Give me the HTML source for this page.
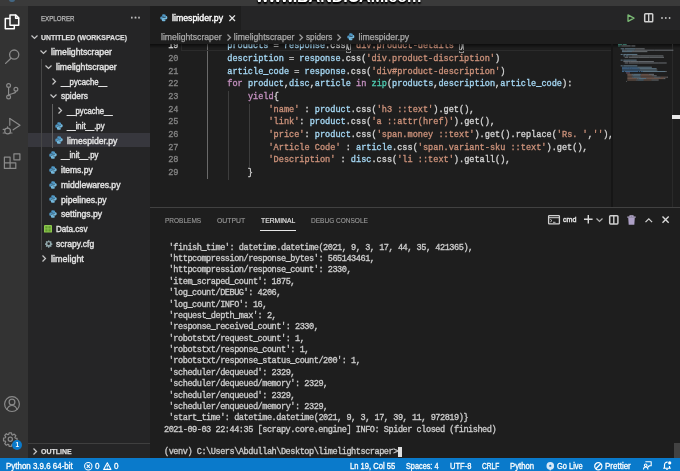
<!DOCTYPE html><html><head><meta charset="utf-8"><title>limespider.py - Untitled (Workspace) - Visual Studio Code</title><style>
*{margin:0;padding:0;box-sizing:border-box}
html,body{width:680px;height:471px;overflow:hidden;background:#1e1e1e}
#root{position:absolute;left:0;top:0;width:680px;height:471px;will-change:transform;overflow:hidden;filter:blur(0.3px)}
body{position:relative;font-family:"Liberation Sans",sans-serif;font-size:8.67px;color:#ccc;-webkit-font-smoothing:antialiased}
.abs{position:absolute}
#title{left:0;top:0;width:680px;height:6px;background:#3a3a3a;overflow:hidden}
#wm{left:256px;top:-11.6px;font-size:16.2px;font-weight:bold;color:#fff;letter-spacing:-0.15px;white-space:nowrap;line-height:16px;text-shadow:0 1px 1px #000,0 1.5px 1.5px #000,0 0 1px #000}
#act{left:0;top:5.5px;width:28px;height:452px;background:#333}
#side{left:28px;top:5.5px;width:122px;height:452px;background:#252526}
#tabs{left:150px;top:5.5px;width:530px;height:24px;background:#252526}
#tab{left:150px;top:6px;width:91px;height:24px;background:#1e1e1e}
#status{left:0;top:457.5px;width:680px;height:14px;background:#0a7acb}
.row{position:absolute;left:28px;width:122px;height:14.67px;line-height:14.67px;white-space:nowrap;color:#ccc}
.row span{position:absolute;top:0}
.sel{background:#37373d}
.t{-webkit-text-stroke:0.25px;position:absolute;white-space:nowrap;line-height:12px;height:12px}
.code{-webkit-text-stroke:0.32px;position:absolute;white-space:pre;font-family:"Liberation Mono",monospace;font-size:8.583px;line-height:12.667px;height:12.667px;color:#d4d4d4}
.ln{-webkit-text-stroke:0.3px;position:absolute;white-space:pre;font-family:"Liberation Mono",monospace;font-size:8.583px;line-height:12.667px;height:12.667px;color:#858585;text-align:right;width:30px;left:148.5px}
.term{-webkit-text-stroke:0.32px;position:absolute;white-space:pre;font-family:"Liberation Mono",monospace;font-size:8.583px;letter-spacing:-0.470px;line-height:11.333px;height:11.333px;color:#ccc;left:168.3px}
.v{color:#a4d6f2}.s{color:#cb917a}.k{color:#c390bf}.f{color:#d4d4d4}.c{color:#4ec9b0}.p{color:#d4d4d4}.b{color:#ffd700}
.g{position:absolute;width:1px;background:#404040}
svg{position:absolute;overflow:visible}
.st{-webkit-text-stroke:0.3px;position:absolute;top:460.1px;white-space:nowrap;color:#fff;font-size:8.67px;line-height:12px;height:12px}
.pt{position:absolute;top:214.6px;white-space:nowrap;color:#969696;font-size:7.9px;transform-origin:0 50%;-webkit-text-stroke:0.15px;line-height:12px;height:12px}
</style></head><body>
<div id="root">
<div id="title" class="abs"><div id="wm" class="abs">www.BANDICAM.com</div><div class="abs" style="left:8.5px;top:-3px;width:6px;height:4.5px;border-radius:3px;background:#4a8cc0;opacity:.55"></div></div>
<div id="act" class="abs"></div><div id="side" class="abs"></div><div id="tabs" class="abs"></div><div id="tab" class="abs"></div>
<svg style="left:0;top:0" width="28" height="471" viewBox="0 0 28 471" fill="none" stroke="#858585" stroke-width="1.1" stroke-linejoin="round" stroke-linecap="round">
<g stroke="#fff" stroke-width="1.5"><path d="M10 15h5.800l2.900 2.900v7.300H10z"/><path d="M15.600 15.200v3h3"/><path d="M9.800 18.400H5.300v10.400h9v-3.400"/></g>
<g stroke="#8a8a8a" stroke-width="1.3"><circle cx="14.2" cy="54.600" r="4.600"/><path d="M11 58.200l-5.400 5.200"/></g>
<g stroke="#8a8a8a" stroke-width="1.2"><circle cx="8.600" cy="85.500" r="1.900"/><circle cx="8.600" cy="97" r="1.900"/><circle cx="15.900" cy="89.300" r="1.900"/><path d="M8.600 87.400v7.700M15.900 91.200c0 3.300-7.300 1.800-7.300 4.600"/></g>
<g stroke="#8a8a8a" stroke-width="1.2"><path d="M9.800 118.500l10.200 6.800-6.800 4.500"/><path d="M9.800 118.500v6.800"/><circle cx="7.600" cy="131" r="2.900"/><path d="M3.200 129.400h1.500M3.200 133h1.500M10.500 133h1.500M7.600 128.100v-1.300"/></g>
<g stroke="#8a8a8a" stroke-width="1.2"><path d="M4.400 157.200h5.700v5.600H4.400zM4.400 162.800h5.700v5.600H4.400zM10.100 162.800h5.700v5.600h-5.700zM13.900 153.800h6v6h-6z"/></g>
<g stroke="#8a8a8a" stroke-width="1.2"><circle cx="12" cy="404.100" r="7.400"/><circle cx="12" cy="402" r="2.900"/><path d="M7 409.500c.9-2.700 2.800-4 5-4s4.100 1.300 5 4"/></g>
</svg>
<svg style="left:2.6px;top:431.9px" width="14.600" height="14.600" viewBox="0 0 16 16"><path fill="none" stroke="#8a8a8a" stroke-width="1.350" stroke-linejoin="round" d="M6.700 1h2.600l.4 2 .9.400 1.700-1.100 1.800 1.800-1.100 1.700.4.900 2 .4v2.600l-2 .4-.4.900 1.100 1.700-1.800 1.800-1.700-1.100-.9.400-.4 2H6.700l-.4-2-.9-.4-1.700 1.100-1.800-1.800 1.100-1.700-.4-.9-2-.4V6.700l2-.4.4-.9-1.100-1.700 1.800-1.800 1.700 1.100.9-.4z"/><circle cx="8" cy="8" r="2.300" fill="none" stroke="#8a8a8a" stroke-width="1.350"/></svg>
<div class="abs" style="left:12.4px;top:440px;width:9.600px;height:9.600px;border-radius:5px;background:#0a7acb"></div>
<div class="abs" style="left:12.4px;top:440px;width:9.600px;height:9.600px;line-height:9.800px;text-align:center;font-size:6.400px;font-weight:bold;color:#fff">1</div>
<div class="t" id="expl" style="left:41.4px;font-size:7.9px;transform:scaleX(0.7809);transform-origin:0 50%;top:12.5px;color:#bbb">EXPLORER</div>
<div class="t" style="left:130.6px;top:11.8px;font-size:9px;color:#c5c5c5;letter-spacing:0.6px;font-weight:bold">···</div>
<div class="abs sel" style="left:28px;top:132.8px;width:122px;height:14.3px"></div>
<div class="g" style="left:41.4px;top:59.38px;height:190.67px;background:#474747"></div>
<div class="g" style="left:52px;top:103.62px;height:44.00px;background:#606060"></div>
<svg style="left:30.80px;top:34.90px" width="7" height="4.2" viewBox="0 0 7 4.2"><path d="M0.5 0.5L3.5 3.5L6.5 0.5" fill="none" stroke="#c5c5c5" stroke-width="1.25"/></svg>
<div class="t" style="left:41.4px;font-size:7.9px;transform:scaleX(0.8772);transform-origin:0 50%;top:31.50px;font-weight:bold;color:#ddd" id="ws">UNTITLED (WORKSPACE)</div>
<svg style="left:39.50px;top:49.87px" width="7" height="4.2" viewBox="0 0 7 4.2"><path d="M0.5 0.5L3.5 3.5L6.5 0.5" fill="none" stroke="#c5c5c5" stroke-width="1.25"/></svg>
<div class="t r1" style="left:50.8px;font-size:8.67px;transform:scaleX(1.0047);transform-origin:0 50%;top:46.07px;color:#e2e2e2;-webkit-text-stroke:0.4px">limelightscraper</div>
<svg style="left:44.50px;top:64.62px" width="7" height="4.2" viewBox="0 0 7 4.2"><path d="M0.5 0.5L3.5 3.5L6.5 0.5" fill="none" stroke="#c5c5c5" stroke-width="1.25"/></svg>
<div class="t r2" style="left:56.3px;font-size:8.67px;transform:scaleX(1.0014);transform-origin:0 50%;top:60.82px;color:#e2e2e2;-webkit-text-stroke:0.4px">limelightscraper</div>
<svg style="left:52.40px;top:77.96px" width="4.2" height="7" viewBox="0 0 4.2 7"><path d="M0.5 0.5L3.5 3.5L0.5 6.5" fill="none" stroke="#c5c5c5" stroke-width="1.25"/></svg>
<div class="t r3" style="left:61.3px;font-size:8.67px;transform:scaleX(0.8957);transform-origin:0 50%;top:75.56px;color:#e2e2e2;-webkit-text-stroke:0.4px">__pycache__</div>
<svg style="left:50.30px;top:94.11px" width="7" height="4.2" viewBox="0 0 7 4.2"><path d="M0.5 0.5L3.5 3.5L6.5 0.5" fill="none" stroke="#c5c5c5" stroke-width="1.25"/></svg>
<div class="t r4" style="left:61.3px;font-size:8.67px;transform:scaleX(0.9624);transform-origin:0 50%;top:90.30px;color:#e2e2e2;-webkit-text-stroke:0.4px">spiders</div>
<svg style="left:57.90px;top:107.45px" width="4.2" height="7" viewBox="0 0 4.2 7"><path d="M0.5 0.5L3.5 3.5L0.5 6.5" fill="none" stroke="#c5c5c5" stroke-width="1.25"/></svg>
<div class="t r5" style="left:67px;font-size:8.67px;transform:scaleX(0.8860);transform-origin:0 50%;top:105.05px;color:#e2e2e2;-webkit-text-stroke:0.4px">__pycache__</div>
<svg style="left:54.90px;top:121.69px" width="8" height="8" viewBox="0 0 16 16"><path fill="#4f97c4" d="M7.900 0.500C4.300 0.500 4.600 2.100 4.600 2.100v2.400h3.500v0.700H3.200S0.500 4.900 0.500 8.300s2.300 3.300 2.300 3.300h1.400V9.800s-0.100-2.300 2.300-2.300h3.400s2.200 0 2.200-2.100V2.700S12.400 0.500 7.900 0.500z"/><path fill="#74b8dc" d="M8.100 15.500c3.600 0 3.300-1.600 3.300-1.600v-2.400H7.900v-0.700h4.900s2.700 0.300 2.700-3.100-2.300-3.300-2.300-3.300h-1.400v1.800s0.100 2.300-2.300 2.300H6.100s-2.200 0-2.200 2.100v2.700s-0.300 2.200 4.200 2.200z"/></svg>
<div class="t r6" style="left:67px;font-size:8.67px;transform:scaleX(0.8966);transform-origin:0 50%;top:119.79px;color:#e2e2e2;-webkit-text-stroke:0.4px">__init__.py</div>
<svg style="left:54.90px;top:136.44px" width="8" height="8" viewBox="0 0 16 16"><path fill="#4f97c4" d="M7.900 0.500C4.300 0.500 4.600 2.100 4.600 2.100v2.400h3.500v0.700H3.200S0.500 4.900 0.500 8.300s2.300 3.300 2.300 3.300h1.400V9.800s-0.100-2.300 2.300-2.300h3.400s2.200 0 2.200-2.100V2.700S12.400 0.500 7.900 0.500z"/><path fill="#74b8dc" d="M8.100 15.500c3.600 0 3.300-1.600 3.300-1.600v-2.400H7.900v-0.700h4.900s2.700 0.300 2.700-3.100-2.300-3.300-2.300-3.300h-1.400v1.800s0.100 2.300-2.300 2.300H6.100s-2.200 0-2.200 2.100v2.700s-0.300 2.200 4.200 2.200z"/></svg>
<div class="t r7" style="left:67px;font-size:8.67px;transform:scaleX(0.9980);transform-origin:0 50%;top:134.54px;color:#e2e2e2;-webkit-text-stroke:0.4px">limespider.py</div>
<svg style="left:49.10px;top:151.19px" width="8" height="8" viewBox="0 0 16 16"><path fill="#4f97c4" d="M7.900 0.500C4.300 0.500 4.600 2.100 4.600 2.100v2.400h3.500v0.700H3.200S0.500 4.900 0.500 8.300s2.300 3.300 2.300 3.300h1.400V9.800s-0.100-2.300 2.300-2.300h3.400s2.200 0 2.200-2.100V2.700S12.400 0.500 7.900 0.500z"/><path fill="#74b8dc" d="M8.100 15.500c3.600 0 3.300-1.600 3.300-1.600v-2.400H7.900v-0.700h4.900s2.700 0.300 2.700-3.100-2.300-3.300-2.300-3.300h-1.400v1.800s0.100 2.300-2.300 2.300H6.100s-2.200 0-2.200 2.100v2.700s-0.300 2.200 4.200 2.200z"/></svg>
<div class="t r8" style="left:61.3px;font-size:8.67px;transform:scaleX(0.8942);transform-origin:0 50%;top:149.28px;color:#e2e2e2;-webkit-text-stroke:0.4px">__init__.py</div>
<svg style="left:49.10px;top:165.93px" width="8" height="8" viewBox="0 0 16 16"><path fill="#4f97c4" d="M7.900 0.500C4.300 0.500 4.600 2.100 4.600 2.100v2.400h3.500v0.700H3.200S0.500 4.900 0.500 8.300s2.300 3.300 2.300 3.300h1.400V9.800s-0.100-2.300 2.300-2.300h3.400s2.200 0 2.200-2.100V2.700S12.400 0.500 7.900 0.500z"/><path fill="#74b8dc" d="M8.100 15.500c3.600 0 3.300-1.600 3.300-1.600v-2.400H7.900v-0.700h4.900s2.700 0.300 2.700-3.100-2.300-3.300-2.300-3.300h-1.400v1.800s0.100 2.300-2.300 2.300H6.100s-2.200 0-2.200 2.100v2.700s-0.300 2.200 4.200 2.200z"/></svg>
<div class="t r9" style="left:61.3px;font-size:8.67px;transform:scaleX(0.9820);transform-origin:0 50%;top:164.03px;color:#e2e2e2;-webkit-text-stroke:0.4px">items.py</div>
<svg style="left:49.10px;top:180.67px" width="8" height="8" viewBox="0 0 16 16"><path fill="#4f97c4" d="M7.900 0.500C4.300 0.500 4.600 2.100 4.600 2.100v2.400h3.500v0.700H3.200S0.500 4.900 0.500 8.300s2.300 3.300 2.300 3.300h1.400V9.800s-0.100-2.300 2.300-2.300h3.400s2.200 0 2.200-2.100V2.700S12.400 0.500 7.900 0.500z"/><path fill="#74b8dc" d="M8.100 15.500c3.600 0 3.300-1.600 3.300-1.600v-2.400H7.900v-0.700h4.900s2.700 0.300 2.700-3.100-2.300-3.300-2.300-3.300h-1.400v1.800s0.100 2.300-2.300 2.300H6.100s-2.200 0-2.200 2.100v2.700s-0.300 2.200 4.200 2.200z"/></svg>
<div class="t r10" style="left:61.3px;font-size:8.67px;transform:scaleX(0.9878);transform-origin:0 50%;top:178.77px;color:#e2e2e2;-webkit-text-stroke:0.4px">middlewares.py</div>
<svg style="left:49.10px;top:195.42px" width="8" height="8" viewBox="0 0 16 16"><path fill="#4f97c4" d="M7.900 0.500C4.300 0.500 4.600 2.100 4.600 2.100v2.400h3.500v0.700H3.200S0.500 4.900 0.500 8.300s2.300 3.300 2.300 3.300h1.400V9.800s-0.100-2.300 2.300-2.300h3.400s2.200 0 2.200-2.100V2.700S12.400 0.500 7.900 0.500z"/><path fill="#74b8dc" d="M8.100 15.500c3.600 0 3.300-1.600 3.300-1.600v-2.400H7.900v-0.700h4.900s2.700 0.300 2.700-3.100-2.300-3.300-2.300-3.300h-1.400v1.800s0.100 2.300-2.300 2.300H6.100s-2.200 0-2.200 2.100v2.700s-0.300 2.200 4.200 2.200z"/></svg>
<div class="t r11" style="left:61.3px;font-size:8.67px;transform:scaleX(0.9980);transform-origin:0 50%;top:193.52px;color:#e2e2e2;-webkit-text-stroke:0.4px">pipelines.py</div>
<svg style="left:49.10px;top:210.16px" width="8" height="8" viewBox="0 0 16 16"><path fill="#4f97c4" d="M7.900 0.500C4.300 0.500 4.600 2.100 4.600 2.100v2.400h3.500v0.700H3.200S0.500 4.900 0.500 8.300s2.300 3.300 2.300 3.300h1.400V9.800s-0.100-2.300 2.300-2.300h3.400s2.200 0 2.200-2.100V2.700S12.400 0.500 7.900 0.500z"/><path fill="#74b8dc" d="M8.100 15.500c3.600 0 3.300-1.600 3.300-1.600v-2.400H7.900v-0.700h4.900s2.700 0.300 2.700-3.100-2.300-3.300-2.300-3.300h-1.400v1.800s0.100 2.300-2.300 2.300H6.100s-2.200 0-2.200 2.100v2.700s-0.300 2.200 4.200 2.200z"/></svg>
<div class="t r12" style="left:61.3px;font-size:8.67px;transform:scaleX(0.9941);transform-origin:0 50%;top:208.26px;color:#e2e2e2;-webkit-text-stroke:0.4px">settings.py</div>
<svg style="left:44.0px;top:225.01px" width="8" height="7.600" viewBox="0 0 8 7.600"><rect x="0" y="0" width="8" height="7.600" rx="0.5" fill="#8fc84f"/><path d="M1.300 1.300h2.300v2.200H1.300zM4.400 1.300h2.300v2.200H4.400zM1.300 4.200h2.300v2.200H1.300zM4.400 4.200h2.300v2.200H4.400z" fill="#5f9a2e"/></svg>
<div class="t r13" style="left:56.4px;font-size:8.67px;transform:scaleX(0.9340);transform-origin:0 50%;top:223.01px;color:#e2e2e2;-webkit-text-stroke:0.4px">Data.csv</div>
<svg style="left:44.6px;top:239.96px" width="7.400" height="7.400" viewBox="-1 -1 18 18"><path fill="#90a8ac" fill-rule="evenodd" d="M6.500 0h3l.5 2.200 1.300.6 1.900-1.200 2.100 2.100-1.200 1.900.6 1.300 2.300.6v3l-2.300.500-.6 1.300 1.200 1.900-2.100 2.100-1.900-1.200-1.300.6-.5 2.300h-3l-.5-2.300-1.300-.6-1.900 1.200-2.100-2.100 1.200-1.900-.6-1.300L-1 10.500v-3l2.300-.6.6-1.300-1.200-1.900 2.100-2.100 1.900 1.200 1.300-.6zM8 4.700a3.300 3.300 0 100 6.600 3.300 3.300 0 000-6.600z"/></svg>
<div class="t r14" style="left:56.3px;font-size:8.67px;transform:scaleX(0.9828);transform-origin:0 50%;top:237.75px;color:#e2e2e2;-webkit-text-stroke:0.4px">scrapy.cfg</div>
<svg style="left:41.50px;top:254.90px" width="4.2" height="7" viewBox="0 0 4.2 7"><path d="M0.5 0.5L3.5 3.5L0.5 6.5" fill="none" stroke="#c5c5c5" stroke-width="1.25"/></svg>
<div class="t r15" style="left:50.8px;font-size:8.67px;transform:scaleX(1.0345);transform-origin:0 50%;top:252.50px;color:#e2e2e2;-webkit-text-stroke:0.4px">limelight</div>
<div class="abs" style="left:28px;top:442.6px;width:122px;height:1px;background:#3f3f3f"></div>
<svg style="left:32.90px;top:448.10px" width="4.2" height="7" viewBox="0 0 4.2 7"><path d="M0.5 0.5L3.5 3.5L0.5 6.5" fill="none" stroke="#c5c5c5" stroke-width="1.25"/></svg>
<div class="t" style="left:41.2px;font-size:7.9px;transform:scaleX(0.8826);transform-origin:0 50%;top:446px;font-weight:bold;color:#ddd" id="outl">OUTLINE</div>
<svg style="left:159.80px;top:14.20px" width="7.6" height="7.6" viewBox="0 0 16 16"><path fill="#4f97c4" d="M7.900 0.500C4.300 0.500 4.600 2.100 4.600 2.100v2.400h3.500v0.700H3.200S0.500 4.900 0.500 8.300s2.300 3.300 2.300 3.300h1.400V9.800s-0.100-2.300 2.300-2.300h3.400s2.200 0 2.200-2.100V2.700S12.400 0.500 7.900 0.500z"/><path fill="#74b8dc" d="M8.100 15.500c3.600 0 3.300-1.600 3.300-1.600v-2.400H7.900v-0.700h4.900s2.700 0.300 2.700-3.100-2.300-3.300-2.300-3.300h-1.400v1.800s0.100 2.300-2.300 2.300H6.100s-2.200 0-2.200 2.100v2.700s-0.300 2.200 4.200 2.200z"/></svg>
<div class="t" id="tabt" style="left:171.8px;font-size:8.67px;transform:scaleX(1.0119);transform-origin:0 50%;top:12px;color:#fff;-webkit-text-stroke:0.35px">limespider.py</div>
<svg style="left:229.3px;top:15px" width="6.4" height="6.4" viewBox="0 0 6.4 6.4"><path d="M0.4 0.4L6 6M6 0.4L0.4 6" stroke="#e4e4e4" stroke-width="1.3"/></svg>
<svg style="left:627.2px;top:14.1px" width="8" height="8.200" viewBox="0 0 8 8.200"><path d="M1 0.900L7 4.100L1 7.300z" fill="none" stroke="#7ab874" stroke-width="1.350" stroke-linejoin="round"/></svg>
<svg style="left:644px;top:13.3px" width="9.4" height="9.4" viewBox="0 0 9.4 9.4"><rect x="0.7" y="0.7" width="8" height="8" rx="0.800" fill="none" stroke="#d0d0d0" stroke-width="1.5"/><path d="M4.700 0.600v8.200" stroke="#d0d0d0" stroke-width="1.4"/></svg>
<svg style="left:661.4px;top:17px" width="10" height="2" viewBox="0 0 10 2"><circle cx="1" cy="1" r="0.9" fill="#c5c5c5"/><circle cx="4.800" cy="1" r="0.9" fill="#c5c5c5"/><circle cx="8.600" cy="1" r="0.9" fill="#c5c5c5"/></svg>
<div class="t" id="bc1" style="left:161px;top:31px;color:#a9a9a9">limelightscraper</div>
<svg style="left:226.60px;top:33.70px" width="4.2" height="7" viewBox="0 0 4.2 7"><path d="M0.5 0.5L3.5 3.5L0.5 6.5" fill="none" stroke="#a0a0a0" stroke-width="1.25"/></svg>
<div class="t" id="bc2" style="left:233.8px;top:31px;color:#a9a9a9">limelightscraper</div>
<svg style="left:299.30px;top:33.70px" width="4.2" height="7" viewBox="0 0 4.2 7"><path d="M0.5 0.5L3.5 3.5L0.5 6.5" fill="none" stroke="#a0a0a0" stroke-width="1.25"/></svg>
<div class="t" id="bc3" style="left:306px;font-size:8.67px;transform:scaleX(0.9445);transform-origin:0 50%;top:31px;color:#a9a9a9">spiders</div>
<svg style="left:336.90px;top:33.70px" width="4.2" height="7" viewBox="0 0 4.2 7"><path d="M0.5 0.5L3.5 3.5L0.5 6.5" fill="none" stroke="#a0a0a0" stroke-width="1.25"/></svg>
<svg style="left:346.50px;top:33.20px" width="7.6" height="7.6" viewBox="0 0 16 16"><path fill="#4f97c4" d="M7.900 0.500C4.300 0.500 4.600 2.100 4.600 2.100v2.400h3.500v0.700H3.200S0.500 4.900 0.500 8.300s2.300 3.300 2.300 3.300h1.400V9.800s-0.100-2.300 2.300-2.300h3.400s2.200 0 2.200-2.100V2.700S12.400 0.500 7.900 0.500z"/><path fill="#74b8dc" d="M8.100 15.500c3.600 0 3.300-1.600 3.300-1.600v-2.400H7.900v-0.700h4.900s2.700 0.300 2.700-3.100-2.300-3.300-2.300-3.300h-1.400v1.800s0.100 2.300-2.300 2.300H6.100s-2.200 0-2.200 2.100v2.700s-0.300 2.200 4.200 2.200z"/></svg>
<div class="t" id="bc4" style="left:358.6px;top:31px;color:#a9a9a9">limespider.py</div>
<div class="abs" style="left:150px;top:44px;width:530px;height:163px;overflow:hidden">
<div class="g" style="left:57.20px;top:-6.00px;height:140.80px;background:#6a6a6a"></div>
<div class="g" style="left:78.00px;top:47.04px;height:88.66px;background:#3d3d3d"></div>
<div class="g" style="left:98.80px;top:59.70px;height:63.33px;background:#3d3d3d"></div>
<div class="ln" style="left:-1.5px;top:-3.63px;color:#e4e4e4">19</div>
<div class="code" id="c19" style="left:36.10px;top:-3.63px">        <span class="v">products</span> = <span class="v">response</span>.<span class="f">css</span>(<span class="s">&#x27;div.product-details&#x27;</span>)</div>
<div class="ln" style="left:-1.5px;top:9.04px">20</div>
<div class="code" id="c20" style="left:36.10px;top:9.04px">        <span class="v">description</span> = <span class="v">response</span>.<span class="f">css</span>(<span class="s">&#x27;div.product-discription&#x27;</span>)</div>
<div class="ln" style="left:-1.5px;top:21.70px">21</div>
<div class="code" id="c21" style="left:36.10px;top:21.70px">        <span class="v">article_code</span> = <span class="v">response</span>.<span class="f">css</span>(<span class="s">&#x27;div#product-description&#x27;</span>)</div>
<div class="ln" style="left:-1.5px;top:34.37px">22</div>
<div class="code" id="c22" style="left:36.10px;top:34.37px">        <span class="k">for</span> <span class="v">product</span>,<span class="v">disc</span>,<span class="v">article</span> <span class="k">in</span> <span class="c">zip</span>(<span class="v">products</span>,<span class="v">description</span>,<span class="v">article_code</span>):</div>
<div class="ln" style="left:-1.5px;top:47.04px">23</div>
<div class="code" id="c23" style="left:36.10px;top:47.04px">            <span class="k">yield</span>{</div>
<div class="ln" style="left:-1.5px;top:59.70px">24</div>
<div class="code" id="c24" style="left:36.10px;top:59.70px">                <span class="s">&#x27;name&#x27;</span> : <span class="v">product</span>.<span class="f">css</span>(<span class="s">&#x27;h3 ::text&#x27;</span>).<span class="f">get</span>(),</div>
<div class="ln" style="left:-1.5px;top:72.37px">25</div>
<div class="code" id="c25" style="left:36.10px;top:72.37px">                <span class="s">&#x27;link&#x27;</span>: <span class="v">product</span>.<span class="f">css</span>(<span class="s">&#x27;a ::attr(href)&#x27;</span>).<span class="f">get</span>(),</div>
<div class="ln" style="left:-1.5px;top:85.04px">26</div>
<div class="code" id="c26" style="left:36.10px;top:85.04px">                <span class="s">&#x27;price&#x27;</span>: <span class="v">product</span>.<span class="f">css</span>(<span class="s">&#x27;span.money ::text&#x27;</span>).<span class="f">get</span>().<span class="f">replace</span>(<span class="s">&#x27;Rs. &#x27;</span>,<span class="s">&#x27;&#x27;</span>),</div>
<div class="ln" style="left:-1.5px;top:97.71px">27</div>
<div class="code" id="c27" style="left:36.10px;top:97.71px">                <span class="s">&#x27;Article Code&#x27;</span> : <span class="v">article</span>.<span class="f">css</span>(<span class="s">&#x27;span.variant-sku ::text&#x27;</span>).<span class="f">get</span>(),</div>
<div class="ln" style="left:-1.5px;top:110.37px">28</div>
<div class="code" id="c28" style="left:36.10px;top:110.37px">                <span class="s">&#x27;Description&#x27;</span> : <span class="v">disc</span>.<span class="f">css</span>(<span class="s">&#x27;li ::text&#x27;</span>).<span class="f">getall</span>(),</div>
<div class="ln" style="left:-1.5px;top:123.04px">29</div>
<div class="code" id="c29" style="left:36.10px;top:123.04px">            }</div>
<div class="abs" style="left:195.75px;top:-3.30px;width:5.15px;height:12px;border:0.7px solid #888"></div>
<div class="abs" style="left:309.05px;top:-3.30px;width:5.15px;height:12px;border:0.7px solid #888"></div>
<div class="abs" style="left:31px;top:-6px;width:430.5px;height:13.3px;border:1.3px solid #2b2b2b"></div>
<div class="abs" style="left:0;top:0;width:530px;height:4px;background:linear-gradient(rgba(0,0,0,0.55),rgba(0,0,0,0))"></div>
<div class="abs" style="left:461.4px;top:0;width:1.2px;height:164px;background:#161616"></div>
<div class="abs" style="left:522px;top:0;width:1px;height:164px;background:#2a2a2a"></div>
<div class="abs" style="left:522px;top:71px;width:8px;height:3.5px;background:#e8e8e8"></div>
</div>
<svg style="left:618px;top:43.8px" width="54" height="42" viewBox="0 0 54 42"><rect x="0.00" y="0.00" width="4.00" height="1.05" fill="#52b5a0" opacity="0.55"/><rect x="4.67" y="0.00" width="4.00" height="1.05" fill="#52b5a0" opacity="0.55"/><rect x="0.00" y="1.42" width="2.67" height="1.05" fill="#52b5a0" opacity="0.55"/><rect x="3.33" y="1.42" width="9.34" height="1.05" fill="#a0a8ae" opacity="0.55"/><rect x="13.34" y="1.42" width="4.00" height="1.05" fill="#a0a8ae" opacity="0.55"/><rect x="2.67" y="4.26" width="3.33" height="1.05" fill="#8fb9d6" opacity="0.55"/><rect x="6.67" y="4.26" width="10.67" height="1.05" fill="#8fb9d6" opacity="0.55"/><rect x="17.34" y="4.26" width="9.34" height="1.05" fill="#a0a8ae" opacity="0.55"/><rect x="4.00" y="5.68" width="2.67" height="1.05" fill="#8fb9d6" opacity="0.55"/><rect x="6.67" y="5.68" width="2.00" height="1.05" fill="#a0a8ae" opacity="0.55"/><rect x="8.67" y="5.68" width="8.00" height="1.05" fill="#8fb9d6" opacity="0.55"/><rect x="16.68" y="5.68" width="20.01" height="1.05" fill="#a0a8ae" opacity="0.55"/><rect x="36.69" y="5.68" width="18.68" height="1.05" fill="#a0a8ae" opacity="0.55"/><rect x="4.00" y="7.10" width="10.01" height="1.05" fill="#8fb9d6" opacity="0.55"/><rect x="14.01" y="7.10" width="2.00" height="1.05" fill="#a0a8ae" opacity="0.55"/><rect x="16.01" y="7.10" width="13.34" height="1.05" fill="#a0a8ae" opacity="0.55"/><rect x="2.67" y="9.94" width="2.00" height="1.05" fill="#8fb9d6" opacity="0.55"/><rect x="5.34" y="9.94" width="3.33" height="1.05" fill="#8fb9d6" opacity="0.55"/><rect x="8.67" y="9.94" width="10.67" height="1.05" fill="#8fb9d6" opacity="0.55"/><rect x="5.34" y="11.36" width="2.00" height="1.05" fill="#8fb9d6" opacity="0.55"/><rect x="8.00" y="11.36" width="2.67" height="1.05" fill="#8fb9d6" opacity="0.55"/><rect x="11.34" y="11.36" width="1.33" height="1.05" fill="#a0a8ae" opacity="0.55"/><rect x="13.34" y="11.36" width="9.34" height="1.05" fill="#a0a8ae" opacity="0.55"/><rect x="22.68" y="11.36" width="17.34" height="1.05" fill="#a0a8ae" opacity="0.55"/><rect x="40.02" y="11.36" width="5.34" height="1.05" fill="#a0a8ae" opacity="0.55"/><rect x="6.67" y="12.78" width="3.33" height="1.05" fill="#a0a8ae" opacity="0.55"/><rect x="10.67" y="12.78" width="5.34" height="1.05" fill="#a0a8ae" opacity="0.55"/><rect x="16.01" y="12.78" width="4.67" height="1.05" fill="#a0a8ae" opacity="0.55"/><rect x="20.68" y="12.78" width="10.67" height="1.05" fill="#a0a8ae" opacity="0.55"/><rect x="31.35" y="12.78" width="14.67" height="1.05" fill="#a0a8ae" opacity="0.55"/><rect x="2.67" y="15.62" width="2.00" height="1.05" fill="#8fb9d6" opacity="0.55"/><rect x="5.34" y="15.62" width="6.67" height="1.05" fill="#8fb9d6" opacity="0.55"/><rect x="12.01" y="15.62" width="6.67" height="1.05" fill="#8fb9d6" opacity="0.55"/><rect x="5.34" y="17.04" width="5.34" height="1.05" fill="#a0a8ae" opacity="0.55"/><rect x="10.67" y="17.04" width="2.00" height="1.05" fill="#a0a8ae" opacity="0.55"/><rect x="12.67" y="17.04" width="8.00" height="1.05" fill="#a0a8ae" opacity="0.55"/><rect x="20.68" y="17.04" width="14.67" height="1.05" fill="#a0a8ae" opacity="0.55"/><rect x="35.35" y="17.04" width="0.67" height="1.05" fill="#a0a8ae" opacity="0.55"/><rect x="6.67" y="18.46" width="3.33" height="1.05" fill="#a0a8ae" opacity="0.55"/><rect x="10.67" y="18.46" width="5.34" height="1.05" fill="#a0a8ae" opacity="0.55"/><rect x="16.01" y="18.46" width="4.67" height="1.05" fill="#a0a8ae" opacity="0.55"/><rect x="20.68" y="18.46" width="20.01" height="1.05" fill="#a0a8ae" opacity="0.55"/><rect x="40.69" y="18.46" width="8.00" height="1.05" fill="#a0a8ae" opacity="0.55"/><rect x="2.67" y="21.30" width="2.00" height="1.05" fill="#8fb9d6" opacity="0.55"/><rect x="5.34" y="21.30" width="8.67" height="1.05" fill="#8fb9d6" opacity="0.55"/><rect x="14.01" y="21.30" width="5.34" height="1.05" fill="#8fb9d6" opacity="0.55"/><rect x="4.00" y="22.72" width="5.34" height="1.05" fill="#5a9ad8" opacity="0.55"/><rect x="9.34" y="22.72" width="2.00" height="1.05" fill="#5a9ad8" opacity="0.55"/><rect x="11.34" y="22.72" width="8.00" height="1.05" fill="#5a9ad8" opacity="0.55"/><rect x="19.34" y="22.72" width="14.01" height="1.05" fill="#8fb9d6" opacity="0.55"/><rect x="33.35" y="22.72" width="0.67" height="1.05" fill="#a0a8ae" opacity="0.55"/><rect x="4.00" y="24.14" width="7.34" height="1.05" fill="#5a9ad8" opacity="0.55"/><rect x="11.34" y="24.14" width="2.00" height="1.05" fill="#5a9ad8" opacity="0.55"/><rect x="13.34" y="24.14" width="8.00" height="1.05" fill="#5a9ad8" opacity="0.55"/><rect x="21.34" y="24.14" width="16.68" height="1.05" fill="#8fb9d6" opacity="0.55"/><rect x="38.02" y="24.14" width="0.67" height="1.05" fill="#a0a8ae" opacity="0.55"/><rect x="4.00" y="25.56" width="8.00" height="1.05" fill="#5a9ad8" opacity="0.55"/><rect x="12.01" y="25.56" width="2.00" height="1.05" fill="#5a9ad8" opacity="0.55"/><rect x="14.01" y="25.56" width="8.00" height="1.05" fill="#5a9ad8" opacity="0.55"/><rect x="22.01" y="25.56" width="16.68" height="1.05" fill="#8fb9d6" opacity="0.55"/><rect x="38.69" y="25.56" width="0.67" height="1.05" fill="#a0a8ae" opacity="0.55"/><rect x="4.00" y="26.98" width="2.00" height="1.05" fill="#5a9ad8" opacity="0.55"/><rect x="6.67" y="26.98" width="13.34" height="1.05" fill="#5a9ad8" opacity="0.55"/><rect x="20.68" y="26.98" width="1.33" height="1.05" fill="#5a9ad8" opacity="0.55"/><rect x="22.68" y="26.98" width="2.00" height="1.05" fill="#5a9ad8" opacity="0.55"/><rect x="24.68" y="26.98" width="22.68" height="1.05" fill="#8fb9d6" opacity="0.55"/><rect x="47.36" y="26.98" width="1.33" height="1.05" fill="#a0a8ae" opacity="0.55"/><rect x="8.00" y="28.40" width="3.33" height="1.05" fill="#a87fa6" opacity="0.55"/><rect x="11.34" y="28.40" width="0.67" height="1.05" fill="#a0a8ae" opacity="0.55"/><rect x="9.34" y="29.82" width="4.00" height="1.05" fill="#b08672" opacity="0.55"/><rect x="13.34" y="29.82" width="2.00" height="1.05" fill="#a0a8ae" opacity="0.55"/><rect x="15.34" y="29.82" width="7.34" height="1.05" fill="#8fb9d6" opacity="0.55"/><rect x="22.68" y="29.82" width="0.67" height="1.05" fill="#a0a8ae" opacity="0.55"/><rect x="23.35" y="29.82" width="7.34" height="1.05" fill="#b08672" opacity="0.55"/><rect x="30.68" y="29.82" width="5.34" height="1.05" fill="#a0a8ae" opacity="0.55"/><rect x="9.34" y="31.24" width="4.00" height="1.05" fill="#b08672" opacity="0.55"/><rect x="13.34" y="31.24" width="1.33" height="1.05" fill="#a0a8ae" opacity="0.55"/><rect x="14.67" y="31.24" width="7.34" height="1.05" fill="#8fb9d6" opacity="0.55"/><rect x="22.01" y="31.24" width="0.67" height="1.05" fill="#a0a8ae" opacity="0.55"/><rect x="22.68" y="31.24" width="10.67" height="1.05" fill="#b08672" opacity="0.55"/><rect x="33.35" y="31.24" width="5.34" height="1.05" fill="#a0a8ae" opacity="0.55"/><rect x="9.34" y="32.66" width="4.67" height="1.05" fill="#b08672" opacity="0.55"/><rect x="14.01" y="32.66" width="1.33" height="1.05" fill="#a0a8ae" opacity="0.55"/><rect x="15.34" y="32.66" width="7.34" height="1.05" fill="#8fb9d6" opacity="0.55"/><rect x="22.68" y="32.66" width="0.67" height="1.05" fill="#a0a8ae" opacity="0.55"/><rect x="23.35" y="32.66" width="12.67" height="1.05" fill="#b08672" opacity="0.55"/><rect x="36.02" y="32.66" width="6.67" height="1.05" fill="#a0a8ae" opacity="0.55"/><rect x="42.69" y="32.66" width="4.00" height="1.05" fill="#b08672" opacity="0.55"/><rect x="46.69" y="32.66" width="0.67" height="1.05" fill="#a0a8ae" opacity="0.55"/><rect x="47.36" y="32.66" width="1.33" height="1.05" fill="#b08672" opacity="0.55"/><rect x="48.69" y="32.66" width="1.33" height="1.05" fill="#a0a8ae" opacity="0.55"/><rect x="9.34" y="34.08" width="9.34" height="1.05" fill="#b08672" opacity="0.55"/><rect x="18.68" y="34.08" width="2.00" height="1.05" fill="#a0a8ae" opacity="0.55"/><rect x="20.68" y="34.08" width="7.34" height="1.05" fill="#8fb9d6" opacity="0.55"/><rect x="28.01" y="34.08" width="0.67" height="1.05" fill="#a0a8ae" opacity="0.55"/><rect x="28.68" y="34.08" width="16.68" height="1.05" fill="#b08672" opacity="0.55"/><rect x="45.36" y="34.08" width="2.00" height="1.05" fill="#a0a8ae" opacity="0.55"/><rect x="9.34" y="35.50" width="8.67" height="1.05" fill="#b08672" opacity="0.55"/><rect x="18.01" y="35.50" width="2.00" height="1.05" fill="#a0a8ae" opacity="0.55"/><rect x="20.01" y="35.50" width="5.34" height="1.05" fill="#8fb9d6" opacity="0.55"/><rect x="25.35" y="35.50" width="0.67" height="1.05" fill="#a0a8ae" opacity="0.55"/><rect x="26.01" y="35.50" width="7.34" height="1.05" fill="#b08672" opacity="0.55"/><rect x="33.35" y="35.50" width="7.34" height="1.05" fill="#a0a8ae" opacity="0.55"/><rect x="8.00" y="36.92" width="0.67" height="1.05" fill="#a0a8ae" opacity="0.55"/></svg>
<div class="abs" style="left:150px;top:207px;width:530px;height:1px;background:#414141"></div>
<div class="pt" id="p1" style="left:165.3px;font-size:7.9px;transform:scaleX(0.8245);transform-origin:0 50%;">PROBLEMS</div>
<div class="pt" id="p2" style="left:216.8px;font-size:7.9px;transform:scaleX(0.8683);transform-origin:0 50%;">OUTPUT</div>
<div class="pt" id="p3" style="left:261px;font-size:7.9px;transform:scaleX(0.8562);transform-origin:0 50%;color:#e7e7e7">TERMINAL</div>
<div class="pt" id="p4" style="left:311px;font-size:7.9px;transform:scaleX(0.8270);transform-origin:0 50%;">DEBUG CONSOLE</div>
<div class="abs" style="left:260px;top:229.9px;width:36.3px;height:1px;background:#e7e7e7"></div>
<svg style="left:548px;top:215px" width="12" height="9.500" viewBox="0 0 12 9.500"><rect x="0.6" y="0.6" width="10.800" height="8.300" rx="0.7" fill="none" stroke="#d0d0d0" stroke-width="1.3"/><path d="M0.6 2.700h10.800" stroke="#d0d0d0" stroke-width="1"/><path d="M2.300 4.300l1.700 1.300-1.700 1.300M5 7.300h2.500" fill="none" stroke="#d0d0d0" stroke-width="0.9"/></svg>
<div class="t" id="cmd" style="left:562.8px;font-size:7.3px;transform:scaleX(0.9789);transform-origin:0 50%;top:214.3px;color:#e2e2e2;-webkit-text-stroke:0.4px">cmd</div>
<svg style="left:583.5px;top:215.4px" width="8.600" height="8.600" viewBox="0 0 8.600 8.600"><path d="M4.300 0v8.600M0 4.300h8.600" stroke="#d8d8d8" stroke-width="1.4"/></svg>
<svg style="left:595.50px;top:217.90px" width="7" height="4.2" viewBox="0 0 7 4.2"><path d="M0.5 0.5L3.5 3.5L6.5 0.5" fill="none" stroke="#b0b0b0" stroke-width="1.25"/></svg>
<svg style="left:609.2px;top:215px" width="9.600" height="9.600" viewBox="0 0 9.600 9.600"><rect x="0.7" y="0.7" width="8.200" height="8.200" rx="0.800" fill="none" stroke="#d0d0d0" stroke-width="1.5"/><path d="M4.800 0.600v8.400" stroke="#d0d0d0" stroke-width="1.4"/></svg>
<svg style="left:626.6px;top:214.6px" width="9" height="10.200" viewBox="0 0 9 10.200"><path d="M0.300 2.100h8.400M3 2V0.700h3V2" fill="none" stroke="#b9add0" stroke-width="1.100"/><path d="M1.200 2.800h6.600l-.5 7H1.700z" fill="#ada0c6"/></svg>
<svg style="left:645px;top:217.6px" width="7.600" height="4.600" viewBox="0 0 7.600 4.600"><path d="M0.500 4.100L3.800 0.800L7.100 4.100" fill="none" stroke="#d0d0d0" stroke-width="1.3"/></svg>
<svg style="left:662.4px;top:216.4px" width="7.200" height="7.200" viewBox="0 0 7.200 7.200"><path d="M0.500 0.500L6.700 6.700M6.700 0.500L0.500 6.700" stroke="#d8d8d8" stroke-width="1.4"/></svg>
<div class="term" id="t0" style="left:168.7px;top:242.63px">&#x27;finish_time&#x27;: datetime.datetime(2021, 9, 3, 17, 44, 35, 421365),</div>
<div class="term" id="t1" style="left:168.7px;top:254.01px">&#x27;httpcompression/response_bytes&#x27;: 565143461,</div>
<div class="term" id="t2" style="left:168.7px;top:265.39px">&#x27;httpcompression/response_count&#x27;: 2330,</div>
<div class="term" id="t3" style="left:168.7px;top:276.77px">&#x27;item_scraped_count&#x27;: 1875,</div>
<div class="term" id="t4" style="left:168.7px;top:288.15px">&#x27;log_count/DEBUG&#x27;: 4206,</div>
<div class="term" id="t5" style="left:168.7px;top:299.53px">&#x27;log_count/INFO&#x27;: 16,</div>
<div class="term" id="t6" style="left:168.7px;top:310.91px">&#x27;request_depth_max&#x27;: 2,</div>
<div class="term" id="t7" style="left:168.7px;top:322.29px">&#x27;response_received_count&#x27;: 2330,</div>
<div class="term" id="t8" style="left:168.7px;top:333.67px">&#x27;robotstxt/request_count&#x27;: 1,</div>
<div class="term" id="t9" style="left:168.7px;top:345.05px">&#x27;robotstxt/response_count&#x27;: 1,</div>
<div class="term" id="t10" style="left:168.7px;top:356.43px">&#x27;robotstxt/response_status_count/200&#x27;: 1,</div>
<div class="term" id="t11" style="left:168.7px;top:367.81px">&#x27;scheduler/dequeued&#x27;: 2329,</div>
<div class="term" id="t12" style="left:168.7px;top:379.19px">&#x27;scheduler/dequeued/memory&#x27;: 2329,</div>
<div class="term" id="t13" style="left:168.7px;top:390.57px">&#x27;scheduler/enqueued&#x27;: 2329,</div>
<div class="term" id="t14" style="left:168.7px;top:401.95px">&#x27;scheduler/enqueued/memory&#x27;: 2329,</div>
<div class="term" id="t15" style="left:168.7px;top:413.33px">&#x27;start_time&#x27;: datetime.datetime(2021, 9, 3, 17, 39, 11, 972819)}</div>
<div class="term" id="t16" style="left:164.0px;top:424.71px">2021-09-03 22:44:35 [scrapy.core.engine] INFO: Spider closed (finished)</div>
<div class="term" id="t18" style="left:164.0px;top:447.47px">(venv) C:\Users\Abdullah\Desktop\limelightscraper&gt;</div>
<div class="abs" style="left:398px;top:446.8px;width:3.6px;height:9.800px;background:#e0e0e0"></div>
<div class="abs" style="left:674px;top:443px;width:6px;height:14.500px;background:#424242"></div>
<div id="status" class="abs"></div>
<div class="st" id="s1" style="left:6.3px;font-size:8.67px;transform:scaleX(0.9178);transform-origin:0 50%;">Python 3.9.6 64-bit</div>
<svg style="left:84.1px;top:461.6px" width="8.600" height="8.600" viewBox="0 0 8.600 8.600"><circle cx="4.300" cy="4.300" r="3.700" fill="none" stroke="#fff" stroke-width="1.050"/><path d="M2.700 2.700l3.200 3.200M5.900 2.700l-3.200 3.200" stroke="#fff" stroke-width="1.050"/></svg>
<div class="st" id="s2" style="left:95.4px;font-size:8.67px;transform:scaleX(0.9332);transform-origin:0 50%;">0</div>
<svg style="left:103.3px;top:461.5px" width="8.600" height="8" viewBox="0 0 8.600 8"><path d="M4.300 0.700L8 7.400H0.600z" fill="none" stroke="#fff" stroke-width="1.050" stroke-linejoin="round"/><path d="M4.300 3v2.300M4.300 5.900v0.800" stroke="#fff" stroke-width="0.95"/></svg>
<div class="st" id="s3" style="left:114.0px;font-size:8.67px;transform:scaleX(0.9332);transform-origin:0 50%;">0</div>
<div class="st" id="s4" style="left:350.2px;font-size:8.67px;transform:scaleX(0.8783);transform-origin:0 50%;">Ln 19, Col 55</div>
<div class="st" id="s5" style="left:406.2px;font-size:8.67px;transform:scaleX(0.8429);transform-origin:0 50%;">Spaces: 4</div>
<div class="st" id="s6" style="left:449.6px;font-size:8.67px;transform:scaleX(0.8712);transform-origin:0 50%;">UTF-8</div>
<div class="st" id="s7" style="left:481.6px;font-size:8.67px;transform:scaleX(0.7685);transform-origin:0 50%;">CRLF</div>
<div class="st" id="s8" style="left:510.2px;font-size:8.67px;transform:scaleX(0.8965);transform-origin:0 50%;">Python</div>
<svg style="left:545.6px;top:461.5px" width="8.600" height="8.600" viewBox="0 0 8.600 8.600"><circle cx="4.300" cy="3.900" r="3.800" fill="#d6e8f7"/><circle cx="4.300" cy="3.900" r="1.100" fill="#0a7acb"/><path d="M4.300 4.800v3.600" stroke="#d6e8f7" stroke-width="1.500"/></svg>
<div class="st" id="s9" style="left:557.2px;font-size:8.67px;transform:scaleX(0.8635);transform-origin:0 50%;">Go Live</div>
<svg style="left:594.4px;top:461.8px" width="8.600" height="8.600" viewBox="0 0 8.600 8.600"><circle cx="4.300" cy="4.300" r="3.600" fill="none" stroke="#fff" stroke-width="1.200"/><path d="M1.800 6.800L6.800 1.800" stroke="#fff" stroke-width="1.200"/></svg>
<div class="st" id="s10" style="left:605.2px;font-size:8.67px;transform:scaleX(0.9232);transform-origin:0 50%;">Prettier</div>
<svg style="left:642.6px;top:461.4px" width="8.800" height="8.800" viewBox="0 0 8.800 8.800"><path d="M2.400 0.700h5.800v4H6.600L5.200 6V4.700" fill="none" stroke="#fff" stroke-width="1.100" stroke-linejoin="round"/><circle cx="2.700" cy="4.300" r="1.300" fill="none" stroke="#fff" stroke-width="1.050"/><path d="M0.500 8.600c0-1.700 1-2.600 2.200-2.600s2.200.9 2.200 2.600" fill="none" stroke="#fff" stroke-width="1.050"/></svg>
<svg style="left:663.4px;top:461.3px" width="8.600" height="9" viewBox="0 0 8.600 9"><path d="M4.600 1.100C2.700.9 1.500 2.300 1.500 4v2.300L.7 7.300h6.600l-.8-1V4.900" fill="none" stroke="#fff" stroke-width="1.150" stroke-linejoin="round"/><path d="M3.100 8.300h1.800" stroke="#fff" stroke-width="1"/><circle cx="6.700" cy="1.900" r="1.600" fill="#fff"/></svg>
</div></body></html>
